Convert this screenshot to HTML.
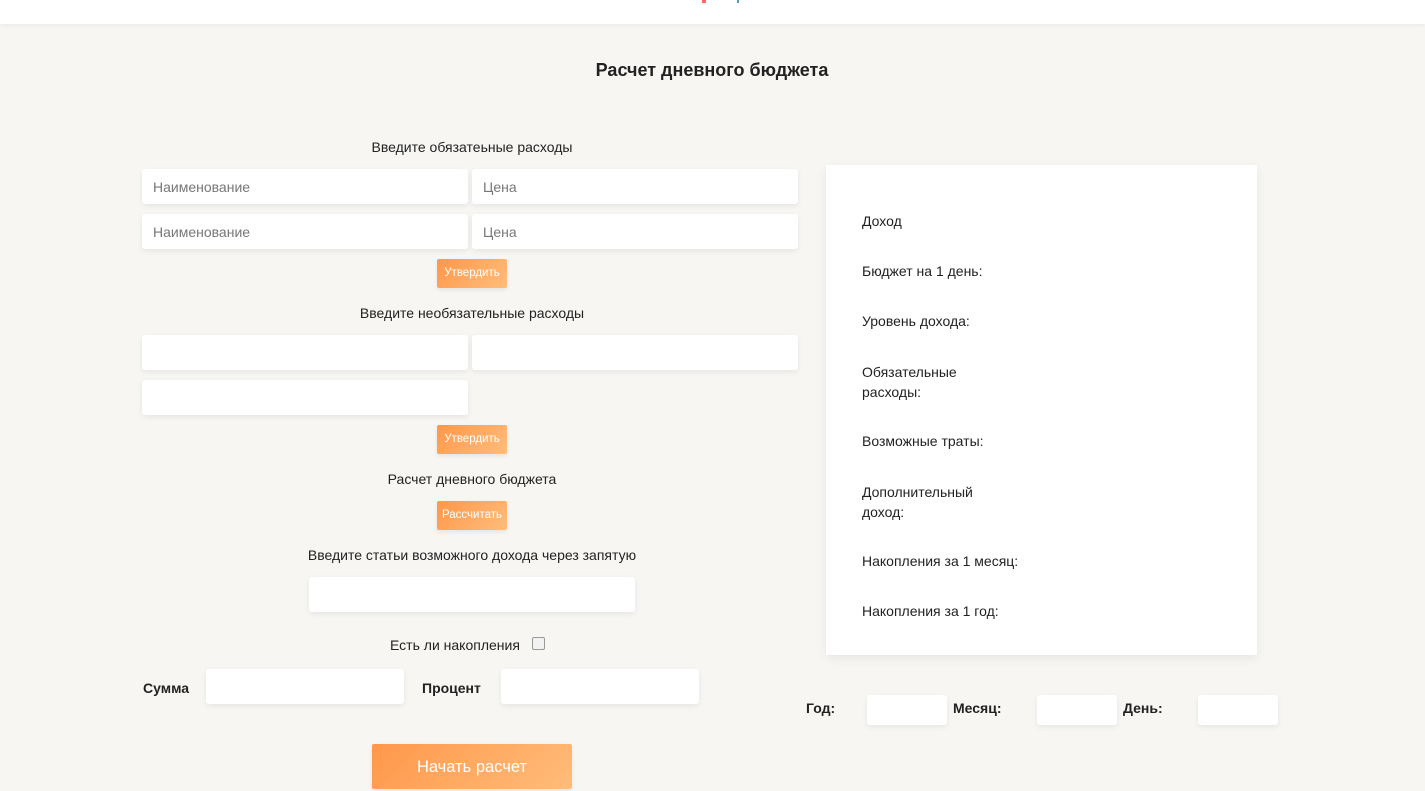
<!DOCTYPE html>
<html><head><meta charset="utf-8"><style>
body{margin:0;width:1425px;height:789px;overflow:hidden;background:#f7f6f3;font-family:"Liberation Sans",sans-serif;color:#222;position:relative}
.hdr{position:absolute;left:0;top:0;width:1425px;height:24px;background:#fff;box-shadow:0 1px 4px rgba(0,0,0,.06)}
.a{position:absolute}
.t{position:absolute;font-size:14px;white-space:nowrap}
.c{transform:translateX(-50%)}
.in{position:absolute;background:#fff;border-radius:3px;box-shadow:0 2px 6px rgba(0,0,0,.07);font-size:14px;color:#777;box-sizing:border-box;padding:10px 0 0 11px}
.btn{position:absolute;background:linear-gradient(135deg,#ff974a,#ffbd7a);color:#fff;font-size:11.5px;border-radius:2px;text-align:center;box-shadow:0 2px 5px rgba(0,0,0,.08)}
.b{font-weight:bold}
</style></head><body>
<div class="hdr"></div>
<div class="a" style="left:702px;top:0;width:4px;height:3px;background:#f66"></div>
<div class="a" style="left:737px;top:0;width:2px;height:3px;background:#59c"></div>
<div class="t c" style="left:712px;top:60px;font-size:18px;font-weight:bold;color:#222">Расчет дневного бюджета</div>

<div class="t c" style="left:472px;top:139px">Введите обязатеьные расходы</div>
<div class="in" style="left:142px;top:169px;width:326px;height:35px">Наименование</div>
<div class="in" style="left:472px;top:169px;width:326px;height:35px">Цена</div>
<div class="in" style="left:142px;top:214px;width:326px;height:35px">Наименование</div>
<div class="in" style="left:472px;top:214px;width:326px;height:35px">Цена</div>
<div class="btn" style="left:437px;top:259px;width:70px;height:29px;line-height:29px">Утвердить</div>

<div class="t c" style="left:472px;top:305px">Введите необязательные расходы</div>
<div class="in" style="left:142px;top:335px;width:326px;height:35px"></div>
<div class="in" style="left:472px;top:335px;width:326px;height:35px"></div>
<div class="in" style="left:142px;top:380px;width:326px;height:35px"></div>
<div class="btn" style="left:437px;top:425px;width:70px;height:29px;line-height:29px">Утвердить</div>

<div class="t c" style="left:472px;top:471px">Расчет дневного бюджета</div>
<div class="btn" style="left:437px;top:501px;width:70px;height:29px;line-height:29px">Рассчитать</div>

<div class="t c" style="left:472px;top:547px">Введите статьи возможного дохода через запятую</div>
<div class="in" style="left:309px;top:577px;width:326px;height:35px"></div>

<div class="t" style="left:390px;top:637px">Есть ли накопления</div>
<div class="a" style="left:532px;top:637px;width:11px;height:11px;border:1px solid #999;border-radius:2px;background:#f2f2f2"></div>

<div class="t b" style="left:143px;top:680px">Сумма</div>
<div class="in" style="left:206px;top:669px;width:198px;height:35px"></div>
<div class="t b" style="left:422px;top:680px">Процент</div>
<div class="in" style="left:501px;top:669px;width:198px;height:35px"></div>

<div class="btn" style="left:372px;top:744px;width:200px;height:45px;line-height:47px;font-size:16.5px">Начать расчет</div>

<div class="a" style="left:826px;top:165px;width:431px;height:490px;background:#fff;box-shadow:0 3px 10px rgba(0,0,0,.07)"></div>
<div class="t" style="left:862px;top:213px">Доход</div>
<div class="t" style="left:862px;top:263px">Бюджет на 1 день:</div>
<div class="t" style="left:862px;top:313px">Уровень дохода:</div>
<div class="t" style="left:862px;top:362px;line-height:20px">Обязательные<br>расходы:</div>
<div class="t" style="left:862px;top:433px">Возможные траты:</div>
<div class="t" style="left:862px;top:482px;line-height:20px">Дополнительный<br>доход:</div>
<div class="t" style="left:862px;top:553px">Накопления за 1 месяц:</div>
<div class="t" style="left:862px;top:603px">Накопления за 1 год:</div>

<div class="t b" style="left:806px;top:700px">Год:</div>
<div class="in" style="left:867px;top:695px;width:80px;height:30px"></div>
<div class="t b" style="left:953px;top:700px">Месяц:</div>
<div class="in" style="left:1037px;top:695px;width:80px;height:30px"></div>
<div class="t b" style="left:1123px;top:700px">День:</div>
<div class="in" style="left:1198px;top:695px;width:80px;height:30px"></div>
</body></html>
